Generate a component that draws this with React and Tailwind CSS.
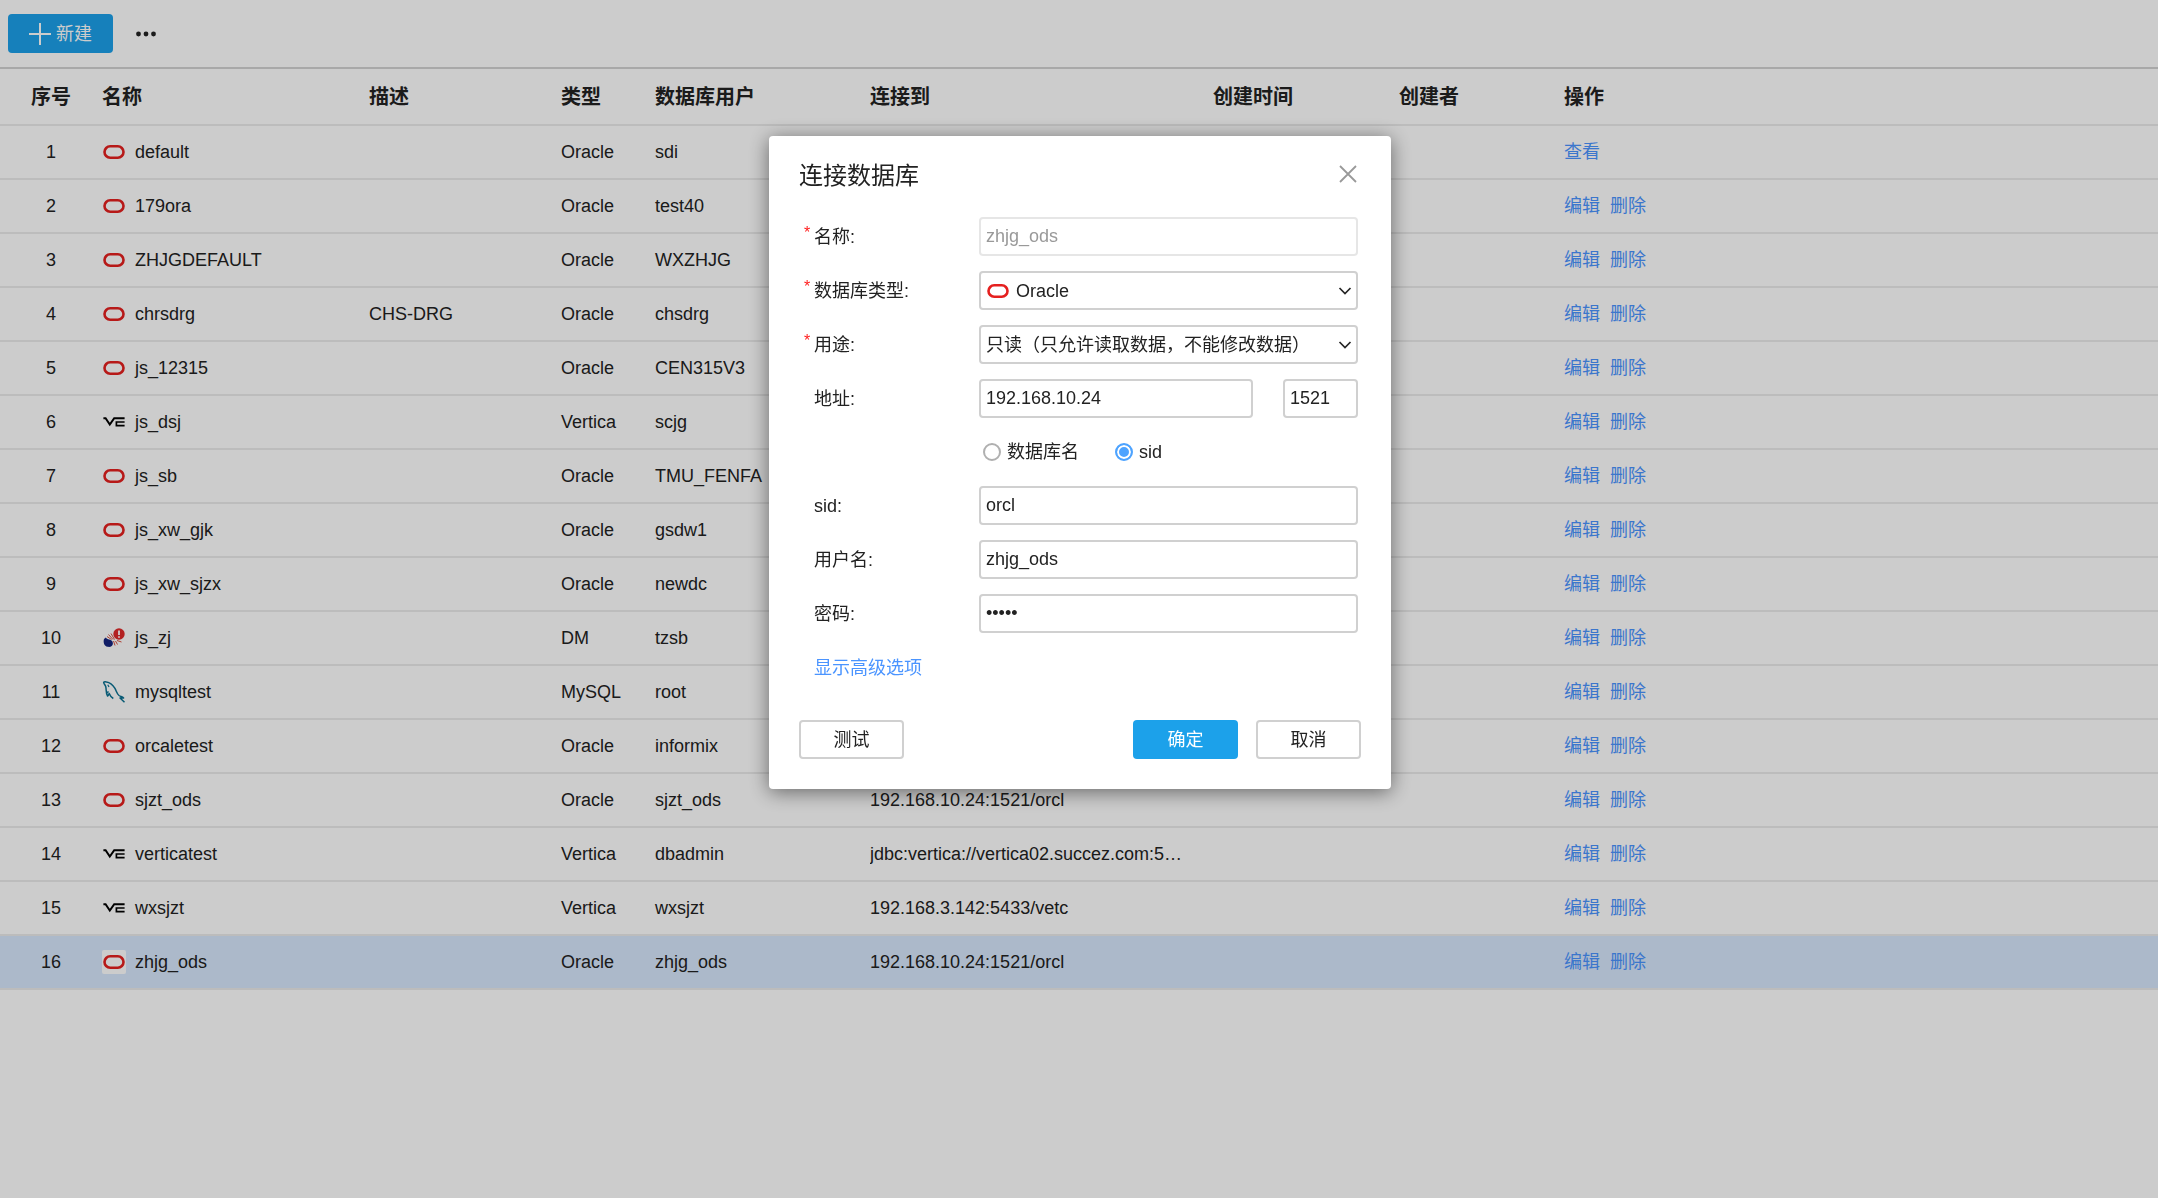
const connections = [
  { name: "default", type: "Oracle", user: "sdi", readOnly: true },
  { name: "179ora", type: "Oracle", user: "test40" },
  { name: "ZHJGDEFAULT", type: "Oracle", user: "WXZHJG" },
  { name: "chrsdrg", desc: "CHS-DRG", type: "Oracle", user: "chsdrg" },
  { name: "js_12315", type: "Oracle", user: "CEN315V3" },
  { name: "js_dsj", type: "Vertica", user: "scjg" },
  { name: "js_sb", type: "Oracle", user: "TMU_FENFA" },
  { name: "js_xw_gjk", type: "Oracle", user: "gsdw1" },
  { name: "js_xw_sjzx", type: "Oracle", user: "newdc" },
  { name: "js_zj", type: "DM", user: "tzsb" },
  { name: "mysqltest", type: "MySQL", user: "root" },
  { name: "orcaletest", type: "Oracle", user: "informix" },
  { name: "sjzt_ods", type: "Oracle", user: "sjzt_ods", url: "192.168.10.24:1521/orcl" },
  { name: "verticatest", type: "Vertica", user: "dbadmin", url: "jdbc:vertica://vertica02.succez.com:5…" },
  { name: "wxsjzt", type: "Vertica", user: "wxsjzt", url: "192.168.3.142:5433/vetc" },
  { name: "zhjg_ods", type: "Oracle", user: "zhjg_ods", url: "192.168.10.24:1521/orcl", selected: true },
];

const columns = [
  { label: "名称", width: "w-[267px]" },
  { label: "描述", width: "w-[192px]" },
  { label: "类型", width: "w-[94px]" },
  { label: "数据库用户", width: "w-[215px]" },
  { label: "连接到", width: "w-[343px]" },
  { label: "创建时间", width: "w-[186px]" },
  { label: "创建者", width: "w-[165px]" },
  { label: "操作", width: "" },
];

function OracleIcon() {
  return (
    <svg width="22" height="14" viewBox="0 0 22 14" fill="none" stroke="#e5201f" strokeWidth="2.6" aria-hidden="true">
      <rect x="1.5" y="1.3" width="19" height="11.4" rx="5.7" />
    </svg>
  );
}

function VerticaIcon() {
  return (
    <svg width="22" height="10" viewBox="0 0 22 10" fill="none" stroke="#000" strokeWidth="1.7" aria-hidden="true">
      <path d="M0.4 1.3H2.6L6.8 7.600L11.200 1.300H21.600" strokeWidth="2" />
      <path d="M21.600 5H13.400V8.600H21.600" />
    </svg>
  );
}

function DmIcon() {
  return (
    <svg width="22" height="20" viewBox="0 0 22 20" fill="none" aria-hidden="true">
      <path d="M1 11C0 14.500 1.200 18 4.600 18.800C7.500 19.300 9.800 18.300 9.900 15.500C10 13 8.200 12.200 6.200 11.600C4.500 11.200 3.500 10.800 2.800 9.600Z" fill="#14247f" />
      <path d="M4 8.500L8.500 11.500M5.500 6.500L10 11.500M8 5.500L11.500 11.500M10.500 13L12 17.500M12.500 13L14.500 16.500M14 12.500L18.500 14" stroke="#d8503f" strokeWidth="1" />
      <circle cx="16" cy="6" r="5.700" fill="#e02a2a" />
      <path d="M16 2.500V7M16 8.200V9.700" stroke="#fff" strokeWidth="1.800" />
    </svg>
  );
}

function MysqlIcon() {
  return (
    <svg width="24" height="24" viewBox="0 0 24 24" fill="none" stroke="#0b7192" strokeWidth="1.500" strokeLinejoin="round" aria-hidden="true">
      <path d="M2 3.500C1 2 2.500 1.500 4.500 2C8 2.400 10.500 4.500 12.800 8.200C14.600 11.500 15 14 17 15.500C18.500 16.500 20.500 16.800 21.600 18L18 18L22.500 22.200" />
      <path d="M2 3.500C3 5 4 6 4 8C4.200 10.500 4 13.500 5.600 16C6.600 15.500 6.800 14.500 7.200 13.500C8 15.500 9.300 17.500 11.300 18.500" />
      <path d="M5.800 4.800L7 7" strokeWidth="1.200" />
      <path d="M5.200 12L6.500 12.500" strokeWidth="2" />
    </svg>
  );
}

function TypeIcon({ type }) {
  return (
    <span className="flex size-6 shrink-0 items-center justify-center rounded-xs bg-white">
      {type === "Oracle" && <OracleIcon />}
      {type === "Vertica" && <VerticaIcon />}
      {type === "DM" && <DmIcon />}
      {type === "MySQL" && <MysqlIcon />}
    </span>
  );
}

function Chevron() {
  return (
    <svg
      className="pointer-events-none absolute top-1/2 right-1.5 -translate-y-1/2"
      width="14"
      height="8"
      viewBox="0 0 14 8"
      fill="none"
      stroke="#262626"
      strokeWidth="1.7"
      aria-hidden="true"
    >
      <path d="M1.500 1L7 6.500L12.500 1" />
    </svg>
  );
}

function Field({ id, label, required, children }) {
  return (
    <div className="flex h-[39px] items-center">
      <label htmlFor={id} className="flex w-[180px] shrink-0 items-center">
        <span className="w-[15px] self-start pl-[5px] text-base leading-5 text-[#ff2020]">{required ? "*" : ""}</span>
        <span>{label}</span>
      </label>
      <div className="flex min-w-0 flex-1 gap-[30px]">{children}</div>
    </div>
  );
}

const inputStyle =
  "h-[39px] w-full min-w-0 rounded-sm border-2 border-[#d0d0d0] bg-white px-[5px] outline-none disabled:border-[#e6e6e6] disabled:text-[#999]";

const radioStyle =
  "size-[18px] appearance-none rounded-full border-2 border-[#b0b0b0] bg-white checked:border-[#4da3ff] checked:bg-[#4da3ff] checked:shadow-[inset_0_0_0_2px_white]";

function ConnectionDialog() {
  return (
    <div className="fixed inset-0 flex items-start justify-center bg-black/20 pt-[136px] pl-0.5">
      <form
        role="dialog"
        aria-labelledby="dialog-title"
        className="w-[622px] rounded-sm bg-white pb-[30px] shadow-[0_3px_20px_rgba(0,0,0,0.5)]"
      >
        <div className="flex h-[81px] items-start justify-between pt-[22px] pr-[34px] pl-[30px]">
          <h2 id="dialog-title" className="text-2xl leading-9">连接数据库</h2>
          <button type="button" aria-label="关闭" className="flex h-8 items-center">
            <svg width="18" height="18" viewBox="0 0 18 18" stroke="#999" strokeWidth="1.800" aria-hidden="true">
              <path d="M1 1L17 17M17 1L1 17" />
            </svg>
          </button>
        </div>

        <div className="flex flex-col gap-[15px] pr-[33px] pl-[30px]">
          <Field id="name" label="名称:" required>
            <input id="name" className={inputStyle} defaultValue="zhjg_ods" disabled />
          </Field>
          <Field id="dbtype" label="数据库类型:" required>
            <div className="relative w-full">
              <select id="dbtype" className={inputStyle + " appearance-none pl-[35px]"}>
                <option>Oracle</option>
              </select>
              <span className="pointer-events-none absolute top-1/2 left-2 -translate-y-1/2">
                <OracleIcon />
              </span>
              <Chevron />
            </div>
          </Field>
          <Field id="usage" label="用途:" required>
            <div className="relative w-full">
              <select id="usage" className={inputStyle + " appearance-none"}>
                <option>只读（只允许读取数据，不能修改数据）</option>
              </select>
              <Chevron />
            </div>
          </Field>
          <Field id="host" label="地址:">
            <input id="host" className={inputStyle} defaultValue="192.168.10.24" />
            <input aria-label="端口" className={inputStyle + " max-w-[75px]"} defaultValue="1521" />
          </Field>
          <div className="flex h-[38px] items-center gap-9 pl-[184px]">
            <label className="flex items-center gap-1.5">
              <input type="radio" name="target" className={radioStyle} />
              数据库名
            </label>
            <label className="flex items-center gap-1.5">
              <input type="radio" name="target" className={radioStyle} defaultChecked />
              sid
            </label>
          </div>
          <Field id="sid" label="sid:">
            <input id="sid" className={inputStyle} defaultValue="orcl" />
          </Field>
          <Field id="username" label="用户名:">
            <input id="username" className={inputStyle} defaultValue="zhjg_ods" />
          </Field>
          <Field id="password" label="密码:">
            <input id="password" type="password" className={inputStyle} defaultValue="12345" />
          </Field>
          <div className="flex h-[39px] items-center pl-[15px]">
            <a href="#advanced" className="text-[#4a94ff]">显示高级选项</a>
          </div>
        </div>

        <div className="mt-[33px] flex gap-[18px] px-[30px]">
          <button type="button" className="mr-auto h-[39px] w-[105px] rounded-sm border-2 border-[#d0d0d0]">测试</button>
          <button type="submit" className="h-[39px] w-[105px] rounded-sm bg-[#1ca1ea] text-white">确定</button>
          <button type="button" className="h-[39px] w-[105px] rounded-sm border-2 border-[#d0d0d0]">取消</button>
        </div>
      </form>
    </div>
  );
}

export default function App() {
  return (
    <div className="min-h-screen bg-white font-['Liberation_Sans','Noto_Sans_CJK_SC',sans-serif] text-lg text-[#222]">
      <header className="flex h-[69px] items-center gap-5 border-b-2 border-[#d2d2d2] pl-2">
        <button type="button" className="flex h-[39px] w-[105px] items-center justify-center gap-[5px] rounded-sm bg-[#1ca1ea] text-white">
          <svg width="22" height="22" viewBox="0 0 22 22" stroke="currentColor" strokeWidth="2" aria-hidden="true">
            <path d="M11 0V22M0 11H22" />
          </svg>
          新建
        </button>
        <button type="button" aria-label="更多" className="flex h-[39px] items-center">
          <svg width="26" height="6" viewBox="0 0 26 6" fill="#222" aria-hidden="true">
            <circle cx="5.500" cy="3" r="2.400" />
            <circle cx="13" cy="3" r="2.400" />
            <circle cx="20.500" cy="3" r="2.400" />
          </svg>
        </button>
      </header>

      <table className="w-full table-fixed border-collapse text-left">
        <thead>
          <tr className="h-14 border-b-2 border-[#ebebeb] text-xl">
            <th className="w-[102px] text-center">序号</th>
            {columns.map((c) => (
              <th key={c.label} className={c.width}>{c.label}</th>
            ))}
          </tr>
        </thead>
        <tbody>
          {connections.map((c, i) => (
            <tr key={c.name} className={"h-[54px] border-b-2 border-[#ebebeb] " + (c.selected ? "bg-[#d8e8fd]" : "")}>
              <td className="text-center">{i + 1}</td>
              <td>
                <div className="flex items-center gap-[9px]">
                  <TypeIcon type={c.type} />
                  {c.name}
                </div>
              </td>
              <td>{c.desc}</td>
              <td>{c.type}</td>
              <td>{c.user}</td>
              <td className="truncate">{c.url}</td>
              <td />
              <td />
              <td>
                <div className="flex gap-2.5 text-[#4a94ff]">
                  {c.readOnly ? (
                    <a href="#view">查看</a>
                  ) : (
                    <>
                      <a href="#edit">编辑</a>
                      <a href="#delete">删除</a>
                    </>
                  )}
                </div>
              </td>
            </tr>
          ))}
        </tbody>
      </table>

      <ConnectionDialog />
    </div>
  );
}
